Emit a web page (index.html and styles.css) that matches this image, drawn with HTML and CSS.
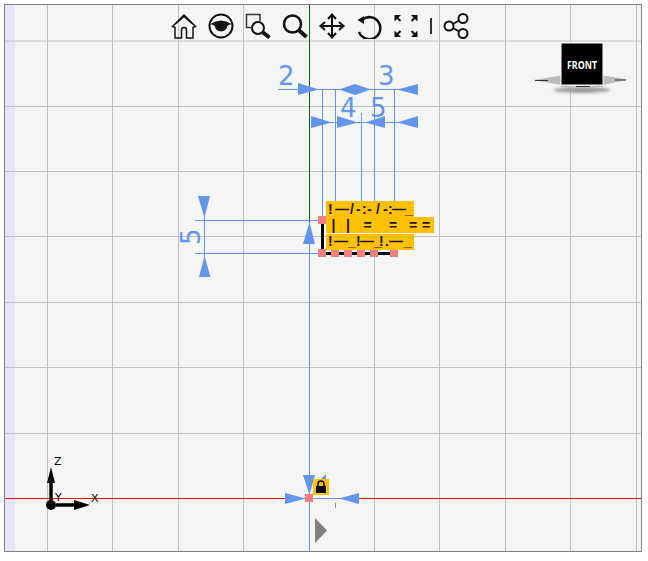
FILE: index.html
```html
<!DOCTYPE html>
<html lang="en">
<head>
<meta charset="utf-8">
<title>CAD viewer</title>
<link rel="stylesheet" href="styles.css">
</head>
<body>
<main class="viewer">
  <svg class="scene" viewBox="5 5 636 546" width="636" height="546" xmlns="http://www.w3.org/2000/svg">
    <defs>
      <filter id="soft" x="-30%" y="-100%" width="160%" height="300%"><feGaussianBlur stdDeviation="1.6"/></filter>
      <filter id="softer" x="-10%" y="-100%" width="120%" height="300%"><feGaussianBlur stdDeviation="0.4"/></filter>
    </defs>
    <rect class="band" x="5" y="5" width="10" height="546"/>
    <g class="grid">
      <path d="M47.5 5V551M112.5 5V551M178.5 5V551M243.5 5V551M374.5 5V551M439.5 5V551M505.5 5V551M570.5 5V551M636.5 5V551"/>
      <path d="M5 41H641M5 106.5H641M5 171.5H641M5 236.5H641M5 302.5H641M5 367.5H641M5 433.5H641"/>
    </g>
    <path class="red-axis" d="M5 498.5H641"/>
    <path class="green-axis" d="M309.5 5V222"/>

    <g class="dim-lines">
      <path d="M309.5 222V551"/>
      <path d="M278 89.5H418M311 122.5H418"/>
      <path d="M322.5 89V218M335.5 89V218M361.5 113V202M374.5 89V218M394.5 89V218"/>
      <path d="M195 220.5H320M195 253.5H320M204.5 197V277"/>
      <path d="M305 498.5H339M335.5 503V508"/>
    </g>
    <g class="dim-arrows">
      <path d="M298 83L319 89.5L298 95Z"/>
      <path d="M355 84L339 89.5L355 95L371 89.5Z"/>
      <path d="M418 84L397 89.5L418 95Z"/>
      <path d="M311 116L332 122.5L311 128Z"/>
      <path d="M337 116L358 122.5L337 128Z"/>
      <path d="M385 116L365 122.5L385 128Z"/>
      <path d="M418 116L397 122.5L418 128Z"/>
      <path d="M198 196H210L204.5 218Z"/>
      <path d="M199 277H210.500L204.500 256Z"/>
      <path d="M303 244H315L309.500 222Z"/>
      <path d="M285 493L306 498.500L285 504Z"/>
      <path d="M359 493L339 498.500L359 504Z"/>
      <path d="M303 475H315L309.500 495Z"/>
      <path d="M320 480L326 474V480Z"/>
    </g>
    <g class="dim-text">
      <text x="278" y="85">2</text>
      <text x="378" y="85">3</text>
      <text x="340" y="117">4</text>
      <text x="370" y="117">5</text>
      <text transform="translate(200 245) rotate(-90)">5</text>
    </g>

    <path class="profile" d="M322.500 220V253.500H394"/>
    <g class="handles">
      <rect x="318" y="216" width="8" height="8"/>
      <rect x="318" y="249" width="8" height="8"/>
      <rect x="331" y="249" width="8" height="8"/>
      <rect x="344" y="249" width="8" height="8"/>
      <rect x="357" y="249" width="8" height="8"/>
      <rect x="370" y="249" width="8" height="8"/>
      <rect x="390" y="249" width="8" height="8"/>
      <rect x="305" y="494" width="8" height="8"/>
    </g>

    <g class="labels">
      <rect x="326" y="201" width="88" height="16"/>
      <rect x="326" y="217" width="108" height="16"/>
      <rect x="326" y="234" width="88" height="16"/>
    </g>
    <g class="label-text">
      <text x="328 335 350 356 362 367 376 383 388 392 405" y="214">!—/-:-/-:—_</text>
      <text x="331.500 346 363.500 389 409 422" y="230">||====</text>
      <text x="328 334 348 356 360 374 379 385 389 404" y="246">!—_!—_!.—_</text>
    </g>

    <rect class="lock-box" x="313" y="479" width="16" height="16"/>
    <path class="lock-shackle" d="M318 486V484A3 3 0 0 1 324 484V486"/>
    <rect class="lock-body" x="316" y="486" width="10" height="7"/>
    <path class="play" d="M315 518L327 530.500L315 543Z"/>

    <g class="triad">
      <path class="triad-line" d="M51 503V480M56 505H75"/>
      <path class="triad-head" d="M51 467L55 483H47ZM90 505L74 500V510Z"/>
      <circle class="triad-head" cx="51" cy="505" r="5"/>
      <text x="54" y="465">Z</text>
      <text x="55" y="501">Y</text>
      <text x="91" y="502">X</text>
    </g>

    <g class="cube">
      <ellipse class="cube-shadow" cx="582" cy="90" rx="28" ry="3" filter="url(#soft)"/>
      <path class="cube-ring" d="M533 80L561 75.500V85ZM628 79.500L603 75.500V85ZM561 84Q582 89 603 84V87H561Z" filter="url(#softer)"/>
      <path class="cube-marks" d="M535 80.500H548M615 80H626M576 86.500H590" filter="url(#softer)"/>
      <rect class="cube-face" x="561" y="43" width="42" height="42"/>
      <text class="cube-text" x="567" y="69" textLength="30" lengthAdjust="spacingAndGlyphs">FRONT</text>
    </g>
  </svg>

  <nav class="toolbar">
    <svg class="tool" viewBox="0 0 26 26"><path class="ln thin" d="M1.500 13.500L13 2L24.500 13.500L22 14.500V25H15.500V17Q15.500 14.500 13 14.500Q10.500 14.500 10.500 17V25H4V14.500Z"/><path class="ln thin" d="M5 10.500L13 3.500L21 10.500"/></svg>
    <svg class="tool" viewBox="0 0 26 26"><circle class="ln" cx="13" cy="13" r="11.500"/><path class="solid" d="M2.500 11Q13 4 23.500 11Q20 11.500 19 13.500C18 20 8 20 7 13.500Q6 11.500 2.500 11Z"/></svg>
    <svg class="tool" viewBox="0 0 26 26"><path class="ln thin muted" d="M6 14.500H1.500V1.500H15V8"/><circle class="ln" cx="13" cy="15" r="6"/><path class="ln heavy" d="M18 19.500L24.500 24.500"/></svg>
    <svg class="tool" viewBox="0 0 26 26"><circle class="ln wide" cx="10.500" cy="11" r="8.500"/><path class="ln heavy" d="M16.500 17L24.500 24"/></svg>
    <svg class="tool" viewBox="0 0 26 26"><path class="ln" d="M13 2V24M1.500 13H24.500"/><path class="ln" d="M9 6L13 1.500L17 6M9 20L13 24.500L17 20M6 9L1.500 13L6 17M20 9L24.500 13L20 17"/></svg>
    <svg class="tool" viewBox="0 0 26 26"><path class="ln wide" d="M6.500 6.500A11 11 0 1 1 3 19"/><path class="solid" d="M1.500 7L8 3V11Z"/></svg>
    <svg class="tool" viewBox="0 0 26 26"><path class="solid" d="M1.500 2H8L1.500 8.500ZM24.500 2H18L24.500 8.500ZM1.500 24H8L1.500 17.500ZM24.500 24H18L24.500 17.500Z"/><path class="ln" d="M3 3.500L7.500 8M23 3.500L18.500 8M3 22.500L7.500 18M23 22.500L18.500 18"/></svg>
    <span class="tool-sep"></span>
    <svg class="tool" viewBox="0 0 26 26"><circle class="ln" cx="6" cy="13" r="4.500"/><circle class="ln" cx="20" cy="5.500" r="4.500"/><circle class="ln" cx="20" cy="20.500" r="4.500"/><path class="ln" d="M10 11L16 7.500M10 15L16 18.500"/></svg>
  </nav>
</main>
</body>
</html>
```

FILE: styles.css
```css
html, body { margin: 0; padding: 0; background: #ffffff; }

.viewer {
  position: relative;
  box-sizing: border-box;
  width: 638px;
  height: 548px;
  margin: 4px;
  border: 1px solid #808080;
  background: #f5f5f5;
  overflow: hidden;
}
.scene { display: block; }

.band { fill: #e6e6fa; }
.grid path { fill: none; stroke: #c0c0c0; stroke-width: 1; }
.red-axis { fill: none; stroke: #ff0000; stroke-width: 1; }
.green-axis { fill: none; stroke: #006400; stroke-width: 1; }

.dim-lines path { fill: none; stroke: #6495ed; stroke-width: 1; }
.dim-arrows path { fill: #6495ed; }
.dim-text text { fill: #6495ed; font-family: "DejaVu Sans", sans-serif; font-size: 26px; }

.profile { fill: none; stroke: #000000; stroke-width: 3; }
.handles rect { fill: #f08080; }

.labels rect { fill: #ffc000; }
.label-text text {
  fill: #1a1400;
  font-family: "Liberation Sans", sans-serif;
  font-size: 14px;
  font-weight: 700;
}

.lock-box { fill: #ffc000; }
.lock-shackle { fill: none; stroke: #000000; stroke-width: 1.5; }
.lock-body { fill: #000000; }
.play { fill: #808080; }

.triad-line { fill: none; stroke: #000000; stroke-width: 3.5; }
.triad-head { fill: #000000; }
.triad text { fill: #000000; font-family: "DejaVu Sans", sans-serif; font-size: 11px; }

.cube-shadow { fill: #9a9a9a; }
.cube-ring { fill: #bcbcbc; }
.cube-marks { fill: none; stroke: #303030; stroke-width: 1; }
.cube-face { fill: #000000; stroke: #ffffff; stroke-width: 1; }
.cube-text { fill: #ffffff; font-family: "Noto Sans", sans-serif; font-size: 11px; font-weight: 700; }

.toolbar {
  position: absolute;
  top: 8px;
  left: 166px;
  display: flex;
  align-items: center;
  gap: 11px;
}
.tool { display: block; width: 26px; height: 26px; }
.tool-sep { display: block; width: 2px; height: 16px; background: #303030; }
.ln { fill: none; stroke: #111111; stroke-width: 2; }
.ln.thin { stroke-width: 1.5; }
.ln.wide { stroke-width: 2.5; }
.ln.heavy { stroke-width: 4; }
.ln.muted { stroke: #333333; }
.solid { fill: #111111; }
```
